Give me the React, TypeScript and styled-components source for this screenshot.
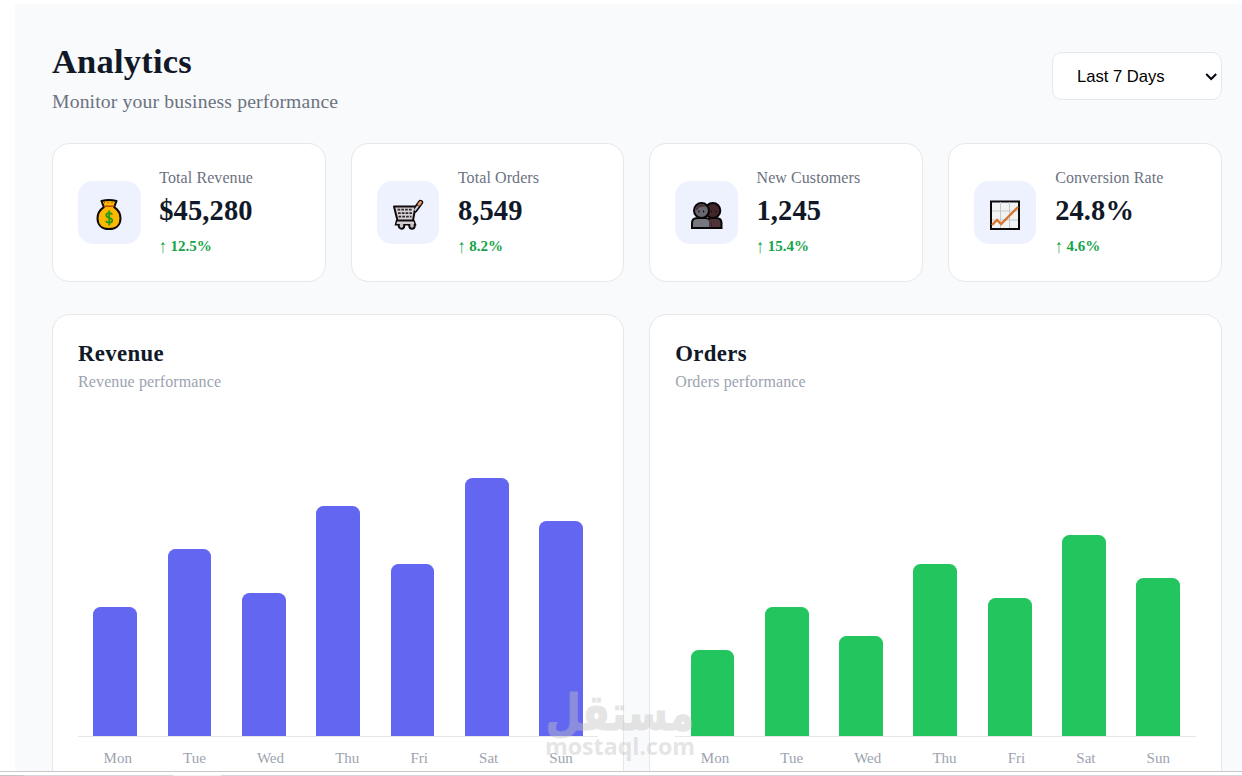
import React from "react";
import styled, { createGlobalStyle } from "styled-components";

const Global = createGlobalStyle`
  * { box-sizing: border-box; }
  body { margin: 0; background: #fff; overflow: hidden; font-family: "Liberation Serif", "Times New Roman", serif; }
`;

const Frame = styled.div`
  position: relative;
  width: 1242px;
  height: 776px;
  padding-top: 4px;
  overflow: hidden;
  display: flex;
  flex-direction: column;
  background: #fff;
`;

const Page = styled.main`
  flex: 0 0 767px;
  margin-left: 15px;
  padding: 36px 20.5px 0 37px;
  background: #f9fafc;
  overflow: hidden;
`;

const Header = styled.header`
  display: flex;
  justify-content: space-between;
  align-items: center;
  height: 72px;
  margin-bottom: 31px;
`;

const Title = styled.h1`
  margin: 0;
  padding-top: 1px;
  font-size: 34.5px;
  letter-spacing: 0.2px;
  line-height: 40px;
  font-weight: 700;
  color: #111827;
`;

const Subtitle = styled.p`
  margin: 8px 0 0;
  font-size: 19.7px;
  letter-spacing: 0.14px;
  line-height: 24px;
  color: #6b7280;
`;

const SelectWrap = styled.div`
  position: relative;
  width: 170px;
  height: 48px;
`;

const Select = styled.select`
  appearance: none;
  width: 100%;
  height: 100%;
  padding: 0 24.5px;
  border: 1px solid #e5e7eb;
  border-radius: 10px;
  background: #fff;
  color: #000;
  font-family: "Liberation Sans", Arial, sans-serif;
  font-size: 16.6px;
`;

const Chevron = styled.svg`
  position: absolute;
  right: 4px;
  top: 19px;
  pointer-events: none;
`;

const Stats = styled.section`
  display: grid;
  grid-template-columns: repeat(4, 1fr);
  gap: 25px;
  margin-bottom: 32.25px;
`;

const StatCard = styled.article`
  display: flex;
  align-items: center;
  gap: 18.75px;
  height: 139px;
  padding: 0 25px;
  background: #fff;
  border: 1px solid #e5e7eb;
  border-radius: 17.5px;
`;

const IconBox = styled.div`
  flex: 0 0 62.5px;
  height: 62.5px;
  display: grid;
  place-items: center;
  padding-top: 4px;
  border-radius: 15px;
  background: #eef2ff;
`;

const StatText = styled.div`
  padding-bottom: 2px;
`;

const Label = styled.div`
  font-size: 16px;
  letter-spacing: 0.08px;
  line-height: 20px;
  color: #6b7280;
  white-space: nowrap;
`;

const Value = styled.div`
  margin: 6px 0 8px;
  font-size: 28.5px;
  letter-spacing: 0.12px;
  line-height: 34px;
  font-weight: 700;
  color: #111827;
`;

const Growth = styled.div`
  font-size: 15px;
  line-height: 20px;
  font-weight: 700;
  color: #16a34a;
`;

const UpArrow = styled.span`
  display: inline-block;
  transform: scaleY(1.3);
`;

const Charts = styled.section`
  display: grid;
  grid-template-columns: repeat(2, 1fr);
  gap: 25px;
`;

const ChartCard = styled.article`
  height: 500px;
  padding: 26px 25px 25px;
  background: #fff;
  border: 1px solid #e5e7eb;
  border-radius: 17.5px;
`;

const ChartTitle = styled.h2`
  margin: 0 0 5px;
  font-size: 22.8px;
  letter-spacing: 0.35px;
  line-height: 26px;
  font-weight: 700;
  color: #111827;
`;

const ChartNote = styled.p`
  margin: 0 0 56.75px;
  font-size: 16px;
  letter-spacing: 0.12px;
  line-height: 20px;
  color: #9ca3af;
`;

const Plot = styled.div`
  display: flex;
  align-items: flex-end;
  justify-content: space-around;
  height: 288px;
  border-bottom: 1px solid #e5e7eb;
`;

const Bar = styled.div<{ $color: string; $value: number }>`
  width: 43.75px;
  height: ${(p) => p.$value}%;
  background: ${(p) => p.$color};
  border-radius: 7.5px 7.5px 0 0;
`;

const Days = styled.div`
  display: flex;
  justify-content: space-around;
  margin-top: 11px;
  font-size: 15px;
  line-height: 20px;
  color: #9ca3af;
`;

const BottomEdge = styled.footer`
  flex: 0 0 5px;
  display: flex;
  align-items: flex-end;
  border-top: 1px solid #c8c8c8;
`;

const EdgePart = styled.span<{ $width?: number; $color: string }>`
  flex: ${(p) => (p.$width ? `0 0 ${p.$width}px` : "1")};
  height: 1px;
  background: ${(p) => p.$color};
`;

const Watermark = styled.div`
  position: absolute;
  left: 545px;
  top: 684px;
  width: 150px;
  height: 80px;
  opacity: 0.42;
  pointer-events: none;

  svg { overflow: visible; }
`;

const MoneyBag = () => (
  <svg width="28" height="33" viewBox="0 0 28 33">
    <path d="M6.5 3Q14 1 21.5 3L19.2 9.2Q25.5 13.5 25.5 20.5C25.5 27.5 20.5 31 14 31S2.5 27.5 2.5 20.5Q2.5 13.5 8.8 9.2Z" fill="#ffb800" stroke="#0b0a09" strokeWidth="2" strokeLinejoin="round" />
    <path d="M8.8 8.2h10.5" stroke="#b34b16" strokeWidth="1.5" />
    <path d="M9.5 3.8v1.4M13 3.8v1.4M17 3.8v1.4" stroke="#99530b" />
    <path d="M17.3 16.6c-1-2-6-2-6 .6 0 3.2 6 2.2 6 5.3 0 3-5.5 2.6-6.5.3M14.2 12.5v15" fill="none" stroke="#299b18" strokeWidth="1.9" />
  </svg>
);

const Cart = () => (
  <svg width="32" height="33" viewBox="0 0 32 33">
    <path d="M23 12 28.5 4.5" stroke="#100b0e" strokeWidth="5.4" strokeLinecap="round" />
    <path d="M2 8.5h21.5L21 22.5H5.5Z" fill="#d5d0d5" stroke="#100b0e" strokeWidth="2" strokeLinejoin="round" />
    <path d="M5.5 11.7h15M6 15.2h14M6.5 18.7h13" stroke="#30272c" strokeWidth="1.7" strokeDasharray="2.7 1.1" />
    <path d="M4.5 22.8H22l1.5 4H3.5Z" fill="#c9c3c8" stroke="#100b0e" strokeWidth="1.5" />
    <g fill="#c9c3c8" stroke="#100b0e" strokeWidth="2">
      <path d="M6.8 26v2a2.7 2.7 0 0 0 5.4 0v-2M17.3 26v2a2.7 2.7 0 0 0 5.4 0v-2" />
    </g>
    <path d="M5 24.8h17" stroke="#d5d0d5" strokeWidth="1.8" />
    <path d="M22.7 12.5 26 8" stroke="#d5d0d5" strokeWidth="2" />
    <path d="M27 6.3 28.5 4.4" stroke="#ed965f" strokeWidth="2.8" strokeLinecap="round" />
  </svg>
);

const People = () => (
  <svg width="32" height="33" viewBox="0 0 32 33">
    <g stroke="#080607" strokeWidth="2">
      <circle cx="21.8" cy="12.5" r="7.5" fill="#44272a" />
      <path d="M15 30v-5q0-5 6-5h4q5.5 0 5.5 5v5Z" fill="#50343b" />
      <circle cx="10.5" cy="12.5" r="7.5" fill="#696870" />
      <path d="M1 30v-5q0-5 5.5-5h8q5 0 5 5v5Z" fill="#77777f" />
    </g>
    <path d="M16.5 21.5h4v7.5h-2v-4q0-2-2-3.5Z" fill="#50343b" />
    <path d="M4.5 11q2.5-5.2 8-4.6l3.3 3-3.3-.8-4.5 1-2 3Z" fill="#4a3134" />
    <path d="M8 12.5v2M12.5 12.5v2M20.5 12.5v2M25 12.5v2" stroke="#171316" strokeWidth="1.3" />
  </svg>
);

const Trend = () => (
  <svg width="30" height="30" viewBox="0 0 30 30">
    <rect x="1" y="1.5" width="28" height="27.5" fill="#f1f3f3" stroke="#0b090a" strokeWidth="2" />
    <path d="M10.5 2v26M19.5 2v26M2 11h26M2 20h26" stroke="#c4c8cc" strokeWidth="1" />
    <path d="m2 25 5-5 4 4L28 7" fill="none" stroke="#d77531" strokeWidth="2.4" />
  </svg>
);

const stats = [
  { label: "Total Revenue", value: "$45,280", growth: "12.5%", icon: <MoneyBag /> },
  { label: "Total Orders", value: "8,549", growth: "8.2%", icon: <Cart /> },
  { label: "New Customers", value: "1,245", growth: "15.4%", icon: <People /> },
  { label: "Conversion Rate", value: "24.8%", growth: "4.6%", icon: <Trend /> },
];

const days = ["Mon", "Tue", "Wed", "Thu", "Fri", "Sat", "Sun"];

const charts = [
  { title: "Revenue", color: "#6366f1", values: [45, 65, 50, 80, 60, 90, 75] },
  { title: "Orders", color: "#22c55e", values: [30, 45, 35, 60, 48, 70, 55] },
];

export default function App() {
  return (
    <Frame>
      <Global />
      <Page>
        <Header>
          <div>
            <Title>Analytics</Title>
            <Subtitle>Monitor your business performance</Subtitle>
          </div>
          <SelectWrap>
            <Select defaultValue="7">
              <option value="7">Last 7 Days</option>
            </Select>
            <Chevron width="13" height="11" viewBox="0 0 13 11">
              <path d="m1.2 3 5 5 5-5" fill="none" stroke="#05050f" strokeWidth="2" />
            </Chevron>
          </SelectWrap>
        </Header>
        <Stats>
          {stats.map((s) => (
            <StatCard key={s.label}>
              <IconBox>{s.icon}</IconBox>
              <StatText>
                <Label>{s.label}</Label>
                <Value>{s.value}</Value>
                <Growth>
                  <UpArrow>↑</UpArrow> {s.growth}
                </Growth>
              </StatText>
            </StatCard>
          ))}
        </Stats>
        <Charts>
          {charts.map((c) => (
            <ChartCard key={c.title}>
              <ChartTitle>{c.title}</ChartTitle>
              <ChartNote>{c.title} performance</ChartNote>
              <Plot>
                {c.values.map((v, i) => (
                  <Bar key={days[i]} $color={c.color} $value={v} />
                ))}
              </Plot>
              <Days>
                {days.map((d) => (
                  <span key={d}>{d}</span>
                ))}
              </Days>
            </ChartCard>
          ))}
        </Charts>
      </Page>
      <BottomEdge>
        <EdgePart $width={24} $color="#c4c4c8" />
        <EdgePart $width={149} $color="#d6d6de" />
        <EdgePart $width={48} $color="#f2f2f2" />
        <EdgePart $color="#d6d6de" />
      </BottomEdge>
      <Watermark>
        <svg width="150" height="80" viewBox="0 0 150 80" fill="#c3c3c3">
          <text x="75" y="42" transform="scale(1 1.1)" textAnchor="middle" direction="rtl" fontFamily="DejaVu Sans" fontWeight="700" fontSize="45" textLength="149" lengthAdjust="spacingAndGlyphs" stroke="#c3c3c3" strokeWidth="1">مستقل</text>
          <text x="0" y="70.5" fontFamily="Open Sans, sans-serif" fontWeight="700" fontSize="23" textLength="150" lengthAdjust="spacingAndGlyphs">mostaql.com</text>
        </svg>
      </Watermark>
    </Frame>
  );
}
